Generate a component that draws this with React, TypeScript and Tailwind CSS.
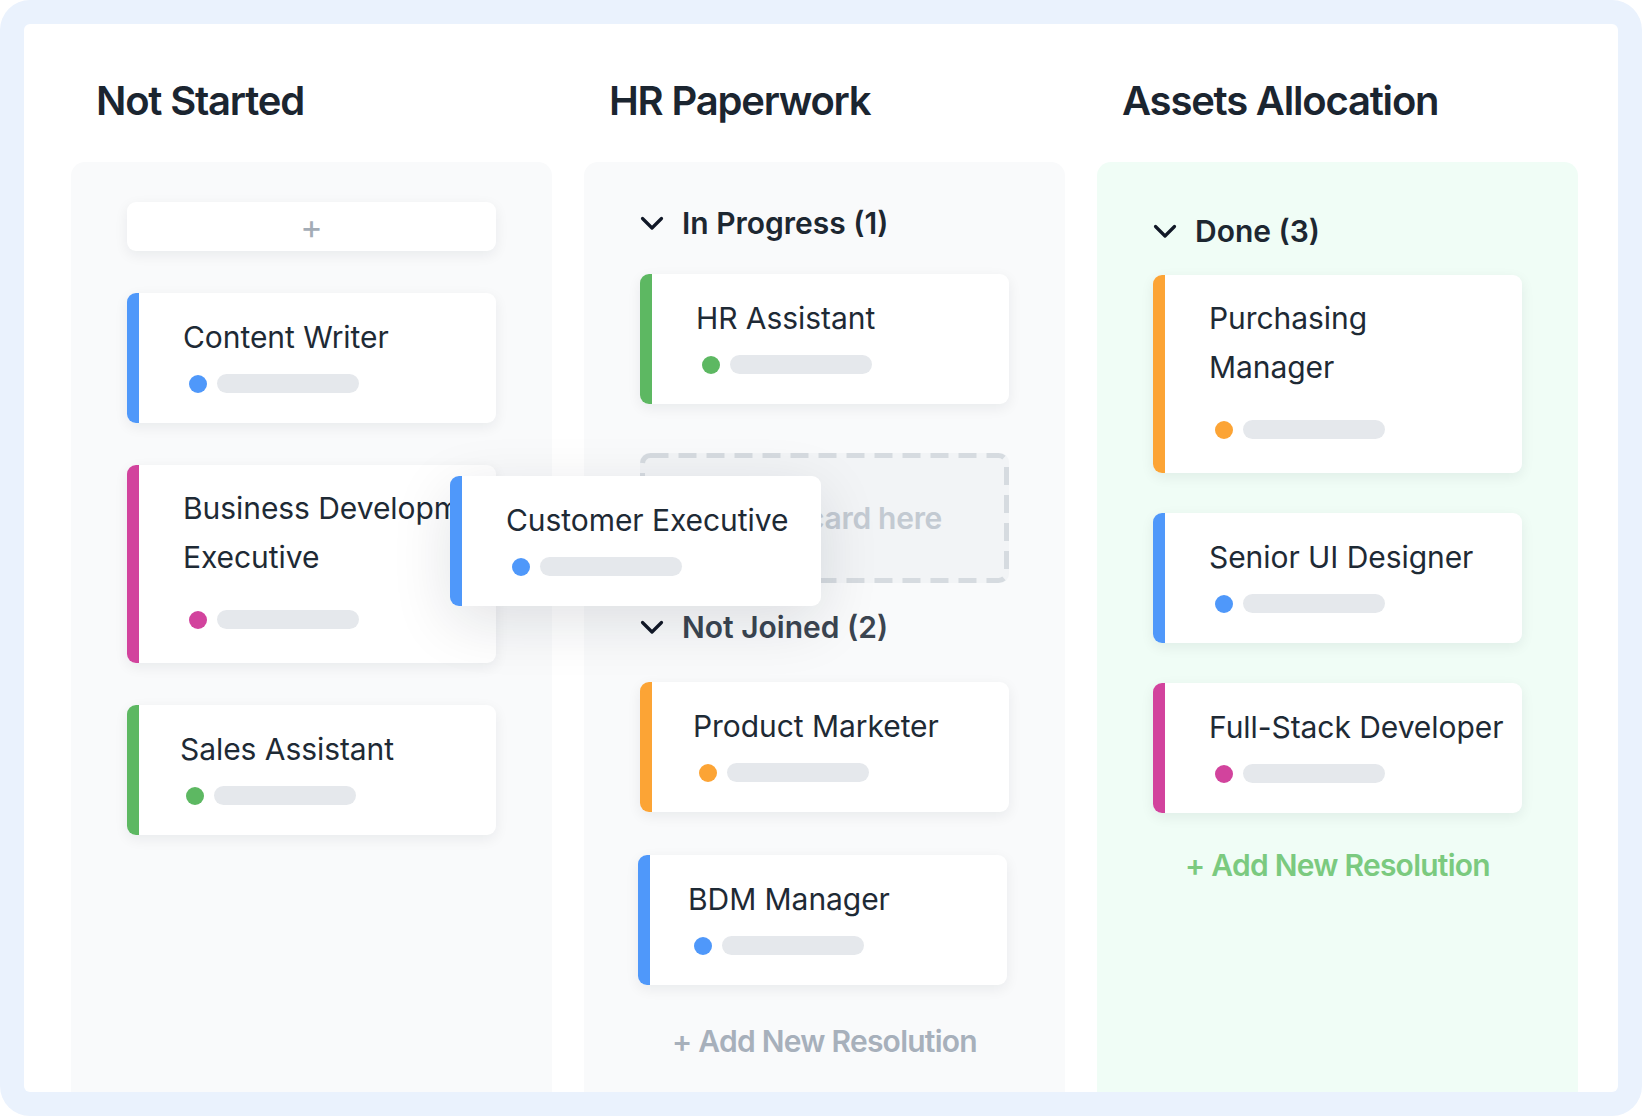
const font = { fontFamily: 'Inter, "Noto Sans", sans-serif' };

interface CardProps {
  title: React.ReactNode;
  bar: string;
  dot: string;
  twoLine?: boolean;
  className?: string;
}

function Card({ title, bar, dot, twoLine, className = '' }: CardProps) {
  return (
    <div
      className={`flex w-[369px] shrink-0 overflow-hidden rounded-[9px] bg-white ${twoLine ? 'h-[198px]' : 'h-[130px]'} ${className}`}
    >
      <div className={`w-[12px] shrink-0 ${bar}`} />
      <div className={`pl-[44px] ${twoLine ? 'pt-[19px]' : 'pt-[20px]'}`}>
        <p className="whitespace-nowrap text-[30px] leading-[49px] tracking-[-0.002em] text-[#1E2A35]">{title}</p>
        <div className={`flex items-center gap-[10px] pl-[6px] ${twoLine ? 'mt-[28px]' : 'mt-[12px]'}`}>
          <span className={`h-[18px] w-[18px] rounded-full ${dot}`} />
          <span className="h-[19px] w-[142px] rounded-full bg-[#E5E8EC]" />
        </div>
      </div>
    </div>
  );
}

function SectionHeader({ label, dim }: { label: string; dim?: boolean }) {
  return (
    <div className="flex h-[40px] w-[369px] items-center gap-[18px]">
      <svg width="24" height="15" viewBox="0 0 24 15" fill="none" className="shrink-0">
        <path d="M2.5 2.5 L12 12 L21.5 2.5" stroke="#111827" strokeWidth="3.2" strokeLinecap="round" strokeLinejoin="round" />
      </svg>
      <span className={`text-[30px] font-semibold ${dim ? 'text-[#3B4551]' : 'text-[#1D2731]'}`}>{label}</span>
    </div>
  );
}

const shadow = 'shadow-[0_4px_14px_rgba(17,24,39,0.07)]';

export default function App() {
  return (
    <div style={font} className="h-[1116px] w-[1642px] overflow-hidden rounded-[30px] bg-[#EAF2FD] p-[24px]">
      <div className="relative flex h-full flex-col overflow-hidden rounded-[6px] bg-white pl-[47px] pr-[42px] pt-[53px]">
        {/* column titles */}
        <div className="grid grid-cols-[481px_481px_481px] gap-x-[32px]">
          {['Not Started', 'HR Paperwork', 'Assets Allocation'].map((t) => (
            <h2
              key={t}
              className="pl-[25px] text-[40px] font-semibold leading-[48px] tracking-[-0.03em] text-[#1B2530]"
            >
              {t}
            </h2>
          ))}
        </div>

        <div className="mt-[37px] grid flex-1 grid-cols-[481px_481px_481px] gap-x-[32px]">
          {/* Not Started */}
          <div className="flex flex-col items-center gap-[42px] rounded-t-[14px] bg-[#F9FAFB] pt-[40px]">
            <button
              className={`flex h-[49px] w-[369px] items-center justify-center rounded-[9px] bg-white text-[34px] font-normal leading-none text-[#A3ACB6] ${shadow}`}
            >
              +
            </button>
            <Card title="Content Writer" bar="bg-[#4F98FA]" dot="bg-[#4F98FA]" className={shadow} />
            <Card
              title={
                <>
                  Business Development
                  <br />
                  Executive
                </>
              }
              bar="bg-[#D2439D]"
              dot="bg-[#D2439D]"
              twoLine
              className={shadow}
            />
            <Card title="Sales Assistant" bar="bg-[#5DB862]" dot="bg-[#5DB862]" className={`${shadow} [&>div+div]:pl-[41px]`} />
          </div>

          {/* HR Paperwork */}
          <div className="flex flex-col items-center rounded-t-[14px] bg-[#F9FAFB] pt-[41px]">
            <SectionHeader label="In Progress (1)" />
            <Card title="HR Assistant" bar="bg-[#5DB862]" dot="bg-[#5DB862]" className={`mt-[31px] ${shadow}`} />
            <div className="relative mt-[49px] flex h-[130px] w-[369px] items-center justify-center rounded-[9px] bg-[#F2F4F6]">
              <svg className="absolute inset-0" width="369" height="130" viewBox="0 0 369 130" fill="none">
                <rect x="2.5" y="2.5" width="364" height="125" rx="8" stroke="#D6DBE0" strokeWidth="5" strokeDasharray="18 10" />
              </svg>
              <span className="relative text-[30px] font-semibold tracking-[-0.01em] text-[#C3CAD2]">Drop a card here</span>
            </div>
            <div className="mt-[24px]">
              <SectionHeader label="Not Joined (2)" dim />
            </div>
            <Card title="Product Marketer" bar="bg-[#FCA435]" dot="bg-[#FCA435]" className={`mt-[35px] ${shadow} [&>div+div]:pl-[41px]`} />
            <Card title="BDM Manager" bar="bg-[#4F98FA]" dot="bg-[#4F98FA]" className={`mt-[43px] ml-[-4px] ${shadow} [&>div+div]:pl-[38px]`} />
            <p className="mt-[36px] text-[30px] font-semibold leading-[40px] tracking-[-0.025em] text-[#A7B0BB]">
              + Add New Resolution
            </p>
          </div>

          {/* Assets Allocation */}
          <div className="flex flex-col items-center rounded-t-[14px] bg-[#F0FDF6] pt-[49px]">
            <SectionHeader label="Done (3)" />
            <Card
              title={
                <>
                  Purchasing
                  <br />
                  Manager
                </>
              }
              bar="bg-[#FCA435]"
              dot="bg-[#FCA435]"
              twoLine
              className={`mt-[24px] ${shadow}`}
            />
            <Card title="Senior UI Designer" bar="bg-[#4F98FA]" dot="bg-[#4F98FA]" className={`mt-[40px] ${shadow}`} />
            <Card title="Full-Stack Developer" bar="bg-[#D2439D]" dot="bg-[#D2439D]" className={`mt-[40px] ${shadow}`} />
            <p className="mt-[32px] text-[30px] font-semibold leading-[40px] tracking-[-0.025em] text-[#7BCA7F]">
              + Add New Resolution
            </p>
          </div>
        </div>

        {/* card being dragged */}
        <div className="absolute left-[426px] top-[452px]">
          <Card
            title="Customer Executive"
            bar="bg-[#4F98FA]"
            dot="bg-[#4F98FA]"
            className="w-[371px] shadow-[0_16px_60px_rgba(17,24,39,0.12)]"
          />
        </div>
      </div>
    </div>
  );
}
